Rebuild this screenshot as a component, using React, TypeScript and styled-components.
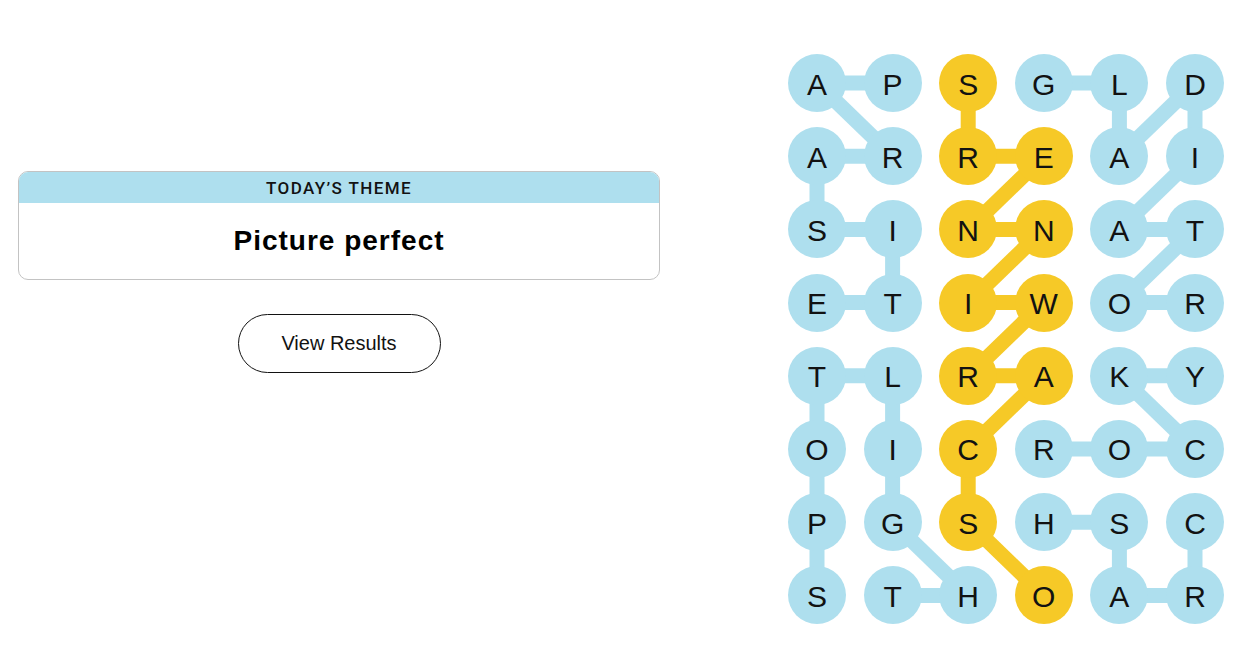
import styled, { createGlobalStyle } from 'styled-components';

const BLUE = '#aedfee';
const YELLOW = '#f6c927';
const COL_STEP = 75.6;
const ROW_STEP = 73.2;
const DOT = 58;

const letters = [
  'APSGLD',
  'ARREAI',
  'SINNAT',
  'ETIWOR',
  'TLRAKY',
  'OICROC',
  'PGSHSC',
  'STHOAR'
];

// [row, col] paths for each found word
const words: { path: [number, number][]; spangram?: boolean }[] = [
  { path: [[0, 1], [0, 0], [1, 1], [1, 0], [2, 0], [2, 1], [3, 1], [3, 0]] },
  { path: [[7, 0], [6, 0], [5, 0], [4, 0], [4, 1], [5, 1], [6, 1], [7, 2], [7, 1]] },
  { path: [[0, 3], [0, 4], [1, 4], [0, 5], [1, 5], [2, 4], [2, 5], [3, 4], [3, 5]] },
  { path: [[5, 3], [5, 4], [5, 5], [4, 4], [4, 5]] },
  { path: [[6, 5], [7, 5], [7, 4], [6, 4], [6, 3]] },
  {
    spangram: true,
    path: [[7, 3], [6, 2], [5, 2], [4, 3], [4, 2], [3, 3], [3, 2], [2, 3], [2, 2], [1, 3], [1, 2], [0, 2]]
  }
];

const isSpangram = (r: number, c: number) =>
  words.some(w => w.spangram && w.path.some(([pr, pc]) => pr === r && pc === c));

const cx = (c: number) => DOT / 2 + c * COL_STEP;
const cy = (r: number) => DOT / 2 + r * ROW_STEP;

const GlobalStyle = createGlobalStyle`
  html, body {
    margin: 0;
    padding: 0;
    background: #fff;
  }
  body {
    font-family: "Liberation Sans", Arial, sans-serif;
    color: #000;
  }
`;

const App = () => {
  const boardW = DOT + 5 * COL_STEP;
  const boardH = DOT + 7 * ROW_STEP;
  return (
    <>
      <GlobalStyle />
      <Page>
        <Side>
          <ThemeCard>
            <ThemeHeader>TODAY’S THEME</ThemeHeader>
            <ThemeBody>Picture perfect</ThemeBody>
          </ThemeCard>
          <ResultsButton>View Results</ResultsButton>
        </Side>
        <Board>
          <Links width={boardW} height={boardH} viewBox={`0 0 ${boardW} ${boardH}`}>
            {words.map((w, i) =>
              w.path.slice(1).map(([r, c], j) => {
                const [pr, pc] = w.path[j];
                return (
                  <line
                    key={`${i}-${j}`}
                    x1={cx(pc)}
                    y1={cy(pr)}
                    x2={cx(c)}
                    y2={cy(r)}
                    stroke={w.spangram ? YELLOW : BLUE}
                    strokeWidth={15}
                  />
                );
              })
            )}
          </Links>
          <Letters>
            {letters.map((row, r) =>
              row.split('').map((ch, c) => (
                <Dot key={`${r}-${c}`} $gold={isSpangram(r, c)}>
                  {ch}
                </Dot>
              ))
            )}
          </Letters>
        </Board>
      </Page>
    </>
  );
};
export default App;

const Page = styled.div`
  width: 1250px;
  height: 672px;
  box-sizing: border-box;
  display: flex;
  padding: 54px 0 0 18px;
`;
const Side = styled.div`
  width: 642px;
  display: flex;
  flex-direction: column;
  align-items: center;
  padding-top: 117px;
`;
const ThemeCard = styled.div`
  width: 100%;
  box-sizing: border-box;
  border: 1px solid #c3c3c3;
  border-radius: 10px;
  overflow: hidden;
`;
const ThemeHeader = styled.div`
  height: 31px;
  background-color: ${BLUE};
  display: flex;
  justify-content: center;
  align-items: center;
  font-family: Roboto, "Liberation Sans", sans-serif;
  font-size: 17px;
  font-weight: 500;
  letter-spacing: 1.4px;
  color: #121212;
`;
const ThemeBody = styled.div`
  height: 76px;
  display: flex;
  justify-content: center;
  align-items: center;
  font-size: 28px;
  font-weight: bold;
  letter-spacing: 1px;
`;
const ResultsButton = styled.button`
  margin-top: 34px;
  width: 203px;
  height: 59px;
  border: 1px solid #121212;
  border-radius: 30px;
  background: #fff;
  font-family: "Liberation Sans", Arial, sans-serif;
  font-size: 20px;
  color: #121212;
  cursor: pointer;
`;
const Board = styled.div`
  position: relative;
  margin-left: 128px;
`;
const Links = styled.svg`
  position: absolute;
  top: 0;
  left: 0;
`;
const Letters = styled.div`
  position: relative;
  display: grid;
  grid-template-columns: repeat(6, ${DOT}px);
  grid-template-rows: repeat(8, ${DOT}px);
  column-gap: ${COL_STEP - DOT}px;
  row-gap: ${ROW_STEP - DOT}px;
`;
const Dot = styled.div<{ $gold?: boolean }>`
  width: ${DOT}px;
  height: ${DOT}px;
  border-radius: 50%;
  background-color: ${p => (p.$gold ? YELLOW : BLUE)};
  display: flex;
  justify-content: center;
  align-items: center;
  padding-top: 3px;
  box-sizing: border-box;
  font-size: 30px;
  color: #121212;
`;
